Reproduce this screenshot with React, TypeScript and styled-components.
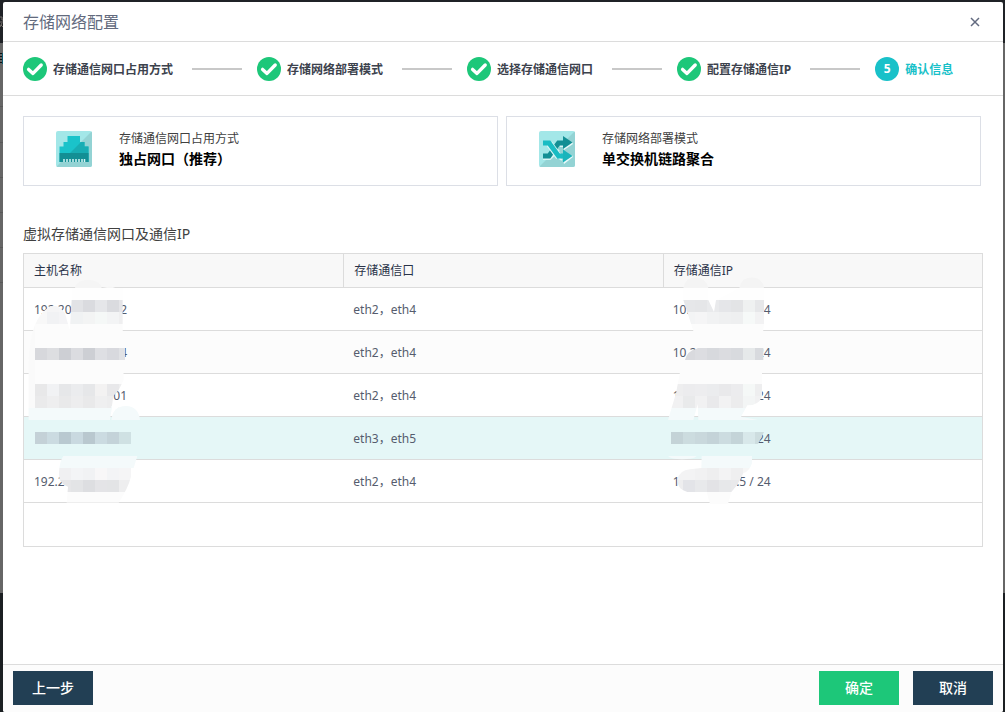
import React from "react";
import styled, { createGlobalStyle, css } from "styled-components";

const GlobalStyle = createGlobalStyle`
  *, *::before, *::after { box-sizing: border-box; }
  body {
    margin: 0;
    font-family: "Noto Sans", "Noto Sans CJK SC", sans-serif;
    font-size: 12px;
    line-height: 20px;
    color: #555c6e;
  }
`;

const Backdrop = styled.div`
  position: relative;
  min-height: 100vh;
  display: flex;
  padding: 2px 2px 0 3px;
  background: linear-gradient(#1f2226 43px, #666666 43px, #666666 593px, #1b1f22 593px);
`;

const PageEdge = styled.svg`
  position: absolute;
  top: 0;
  left: 0;
`;

const Dialog = styled.section`
  flex: 1;
  min-width: 0;
  display: flex;
  flex-direction: column;
  background: #ffffff;
  border-radius: 2px;
  overflow: hidden;
`;

const DialogHeader = styled.header`
  display: flex;
  align-items: center;
  justify-content: space-between;
  height: 40px;
  padding: 0 20px;
  border-bottom: 1px solid #dcdcdc;
`;

const DialogTitle = styled.h1`
  margin: 0;
  font-size: 16px;
  font-weight: 400;
  line-height: 24px;
  color: #626a7d;
`;

const CloseButton = styled.button`
  display: flex;
  align-items: center;
  justify-content: center;
  width: 16px;
  height: 16px;
  padding: 0;
  border: 0;
  background: none;
  color: #636b80;
  cursor: pointer;
`;

const Steps = styled.ol`
  display: flex;
  align-items: center;
  height: 54px;
  margin: 0;
  padding: 0 20px;
  list-style: none;
  border-bottom: 1px solid #dcdcdc;
`;

const Step = styled.li<{ $current?: boolean }>`
  display: flex;
  align-items: center;
  gap: 6px;
  flex: none;
  font-weight: 700;
  color: ${(p) => (p.$current ? "#19c1c9" : "#3c424d")};

  &:not(:last-child)::after {
    content: "";
    width: 50px;
    height: 2px;
    margin: 0 15px 0 13px;
    background: #c8c8c8;
  }
`;

const StepName = styled.span`
  padding-top: 2px;
`;

const StepNumber = styled.span`
  display: flex;
  align-items: center;
  justify-content: center;
  width: 24px;
  height: 24px;
  border-radius: 50%;
  background: #19c1c9;
  color: #ffffff;
`;

const Body = styled.main`
  flex: 1;
  padding: 20px;
`;

const Cards = styled.div`
  display: grid;
  grid-template-columns: 1fr 1fr;
  gap: 8px;
  padding-right: 2px;
`;

const Card = styled.div`
  display: flex;
  align-items: center;
  gap: 27px;
  height: 70px;
  padding: 0 32px 4px;
  border: 1px solid #dcdfe6;
`;

const CardLabel = styled.div`
  color: #404040;
`;

const CardValue = styled.div`
  font-size: 14px;
  font-weight: 700;
  color: #000000;
`;

const SectionTitle = styled.h2`
  margin: 38px 0 9px;
  font-size: 14px;
  font-weight: 400;
  color: #404040;
`;

const TableBox = styled.div`
  padding-bottom: 43px;
  border: 1px solid #dcdcdc;
`;

const Table = styled.table`
  width: 100%;
  table-layout: fixed;
  border-collapse: separate;
  border-spacing: 0;
`;

const HeadCell = styled.th`
  position: relative;
  height: 34px;
  padding: 0 10px;
  border-bottom: 1px solid #dcdcdc;
  background: #f8f8f8;
  font-weight: 400;
  text-align: left;
  color: #2a3348;

  & + & {
    border-left: 1px solid #dcdcdc;
  }
`;

const Row = styled.tr<{ $active?: boolean }>`
  &:nth-child(even) {
    background: #fcfcfc;
  }
  ${(p) =>
    p.$active &&
    css`
      &&& {
        background: #e5f7f7;
      }
    `}
`;

const Cell = styled.td`
  height: 43px;
  padding: 2px 10px 0;
  border-bottom: 1px solid #dcdcdc;
`;

const Masked = styled.span<{ $width: number }>`
  display: flex;
  justify-content: space-between;
  width: ${(p) => p.$width}px;
  white-space: pre;
`;

const MosaicSvg = styled.svg`
  position: absolute;
  z-index: 1;
  top: 0;
  left: 0;
  pointer-events: none;
`;

const DialogFooter = styled.footer`
  display: flex;
  gap: 14px;
  padding: 6px 10px 7px;
  border-top: 1px solid #dcdcdc;
  background: #fcfcfc;
`;

const Button = styled.button<{ $primary?: boolean }>`
  width: 80px;
  height: 34px;
  padding: 0;
  border: 0;
  background: ${(p) => (p.$primary ? "#1dc779" : "#223f54")};
  color: #ffffff;
  font: inherit;
  font-size: 14px;
  font-weight: 500;
  cursor: pointer;

  &:first-child {
    margin-right: auto;
  }
`;

const CheckIcon = () => (
  <svg width="24" height="24" viewBox="0 0 24 24" aria-hidden="true">
    <circle cx="12" cy="12" r="12" fill="#1dc779" />
    <path d="M5.6 12.4 L10 16.4 L18.2 8" fill="none" stroke="#fff" strokeWidth="3.4" strokeLinecap="round" strokeLinejoin="round" />
  </svg>
);

const PortIcon = () => (
  <svg width="36" height="36" viewBox="0 0 36 36" aria-hidden="true">
    <clipPath id="port-tile"><rect width="36" height="36" rx="2" /></clipPath>
    <clipPath id="port-body"><path d="M11.500 5H24v6h4.500v4.500h4V31h-29V15.500h4V11h4z" /></clipPath>
    <g clipPath="url(#port-tile)">
      <path d="M0 0h36v36H0z" fill="#a3e7e8" />
      <path d="M36 0v36H0z" fill="#93d3d4" />
    </g>
    <g clipPath="url(#port-body)">
      <path d="M0 0h36v36H0z" fill="#1ac3ca" />
      <path d="M36 0v36H0z" fill="#18adb3" />
      <path d="M0 22h36v14H0z" fill="#138f94" />
    </g>
    <path d="M8 28v3M11 28v3M14 28v3M17 28v3M20 28v3M23 28v3M26 28v3M28.500 28v3" stroke="#d5f4f4" strokeWidth="1.500" />
  </svg>
);

const ShuffleIcon = () => (
  <svg width="36" height="36" viewBox="0 0 36 36" aria-hidden="true">
    <clipPath id="mix-tile"><rect width="36" height="36" rx="2" /></clipPath>
    <g clipPath="url(#mix-tile)">
      <path d="M0 0h36v36H0z" fill="#a3e7e8" />
      <path d="M36 0v36H0z" fill="#93d3d4" />
    </g>
    <path d="M4 28h7l9-9M20 27l3 2M21 15h3" fill="none" stroke="#d9f5f5" strokeWidth="2" />
    <path d="M25 19l9-6-1-2-9 6zM25 33l9-7-1-2-9 6z" fill="#e8f9f9" />
    <path d="M4 25h6L19.500 12H25" fill="none" stroke="#138f94" strokeWidth="5" />
    <path d="M24 5l9.500 6.500L24 18z" fill="#138f94" />
    <path d="M10.500 13L20 26" fill="none" stroke="#d9f5f5" strokeWidth="7" />
    <path d="M4 12h6l9.500 13H25" fill="none" stroke="#19bcc3" strokeWidth="5" />
    <path d="M24 18.500l9.500 6.500L24 31.500z" fill="#19b4bb" />
  </svg>
);

type Band = { y: number; x: number; h?: number; colors: string[] };

const CELL = 36;

const hostShape =
  "M225 24C228 -8 300 -8 305 24L318 22Q332 16 346 24L368 24V132L371 300L356 330L340 348L330 420H85V250Q90 150 118 110Q160 50 195 100L209 150L215 60V24Z" +
  "M335 420Q338 378 378 378Q416 380 420 420Z" +
  "M105 204H375V240H105ZM105 456H393V492H105Z" +
  "M190 528H412L393 590Q384 625 356 668H200L204 620Q176 612 177 580Q178 545 190 528Z";

const hostBands: Band[] = [
  { y: -12, x: 213, colors: Array(5).fill("#f5f5f5") },
  { y: 24, x: 213, colors: Array(5).fill("#fefefe") },
  { y: 60, x: 105, colors: ["#f8f8f8", "#f5f5f6", "#f6f6f7", "#e2e3e6", "#dadbdf", "#e5e6e9", "#dadbdf", "#e5e5e8"] },
  { y: 96, x: 69, colors: ["#fafafa", "#f8f8f8", "#f1f2f4", "#f4f4f6", "#f0f2f3", "#f3f4f4", "#f5f8f7", "#f3f4f5", "#efeff0"] },
  { y: 132, x: 69, h: 72, colors: ["#fafafa", ...Array(8).fill("#fcfcfc")] },
  { y: 204, x: 69, colors: ["#fafafa", "#d7d8dc", "#dddee1", "#cdcfd4", "#dbdce0", "#cdcfd4", "#dedfe3", "#d8d9de", "#e1e2e5"] },
  { y: 240, x: 69, h: 72, colors: ["#fafafa", ...Array(8).fill("#fcfcfc")] },
  { y: 312, x: 69, colors: ["#fafafa", "#e8e8e9", "#f1f2f4", "#e6e7e9", "#ebecee", "#e6e7e9", "#f3f2f2", "#e8e8ea", "#eeeeef"] },
  { y: 348, x: 69, colors: ["#fafafa", "#eaeaeb", "#eeeeef", "#e9e9ea", "#ededee", "#e9e9ea", "#efeff0", "#ededee"] },
  { y: 378, x: 333, h: 42, colors: Array(3).fill("#f4fafb") },
  { y: 384, x: 69, colors: Array(8).fill("#f4fafb") },
  { y: 456, x: 105, colors: ["#c4d1d7", "#cbdbe1", "#b9c9d0", "#c9d9e0", "#b9c8cf", "#cbdbe1", "#c4d3d9", "#cfe1e3"] },
  { y: 528, x: 177, colors: Array(7).fill("#f4fafb") },
  { y: 564, x: 177, colors: ["#f0f0f2", "#f3f4f6", "#f1f2f4", "#f8f7f8", "#f3f4f6", "#f5f5f6"] },
  { y: 600, x: 177, colors: ["#e6e6e8", "#e3e4e6", "#dddee1", "#e4e4e7", "#e3e4e6", "#eeeeef"] },
  { y: 636, x: 177, colors: Array(7).fill("#fcfcfc") },
];

const addressShape =
  "M160 114Q166 82 198 82Q228 84 235 114L235 150L252 186L258 150L328 114Q334 82 366 82Q398 84 402 114V222L398 258V294H400V330L396 366V440Q386 466 352 466L333 500L384 510H205L203 462L190 510H114L138 430L150 366L165 330Q172 302 200 296L204 294L195 258L160 150Z" +
  "M123 546H402L384 582H123Z" +
  "M114 618H200Q190 628 156 628Q124 628 114 618Z" +
  "M215 618H366V640Q358 664 340 670L322 704L304 726L294 762H240L230 726H172Q142 718 142 690Q148 660 180 658L214 654Z";

const addressBands: Band[] = [
  { y: 78, x: 159, colors: Array(7).fill("#f4f4f4") },
  { y: 114, x: 159, colors: Array(7).fill("#fefefe") },
  { y: 150, x: 159, colors: ["#e6e7e9", "#e5e6e8", "#e9eaec", "#e5e6e9", "#e3e4e6", "#eff1f1", "#e6e7e9"] },
  { y: 186, x: 159, colors: ["#f3f4f5", "#f5f5f6", "#f1f2f3", "#eff0f1", "#eeeff0", "#f6f9f8", "#f2f2f3"] },
  { y: 222, x: 159, h: 72, colors: Array(7).fill("#fcfcfc") },
  { y: 294, x: 159, colors: ["#d9dade", "#dcdde1", "#d7d9dd", "#dbdce0", "#d8dade", "#e6e9ea", "#d8dade"] },
  { y: 330, x: 123, h: 72, colors: Array(8).fill("#fcfcfc") },
  { y: 402, x: 123, colors: ["#eeeeef", "#ececee", "#ededef", "#ebecee", "#e9e9eb", "#ececee", "#f5f8f7", "#eeeeef"] },
  { y: 438, x: 123, colors: ["#f1f1f2", "#e9eaeb", "#f1f1f2", "#e9e9eb", "#f2f2f3", "#ececed", "#f3f5f5", "#f1f1f2"] },
  { y: 474, x: 87, colors: Array(9).fill("#f4fafb") },
  { y: 546, x: 123, colors: ["#c4d3d7", "#ccdcdf", "#c9d8dc", "#c4d3d8", "#ccdce0", "#c4d4d8", "#d8e8ea", "#cddddf"] },
  { y: 618, x: 87, colors: Array(9).fill("#f4fafb") },
  { y: 654, x: 123, colors: ["#f3f3f4", "#f3f3f4", "#f1f1f2", "#eeeeef", "#f3f3f4", "#efeff0", "#f6f6f6"] },
  { y: 690, x: 123, colors: ["#eeeeef", "#e3e4e8", "#e8e9eb", "#e3e3e6", "#e7e8ea", "#e9e9eb", "#f1f1f2"] },
  { y: 726, x: 195, colors: Array(4).fill("#fcfcfc") },
];

const Mosaic = ({ id, viewBox, shape, bands }: { id: string; viewBox: string; shape: string; bands: Band[] }) => (
  <MosaicSvg width="200" height="260" viewBox={viewBox} aria-hidden="true">
    <clipPath id={id}><path d={shape} /></clipPath>
    <g clipPath={`url(#${id})`} shapeRendering="crispEdges">
      {bands.map((band) =>
        band.colors.map((fill, i) => (
          <rect key={`${band.y}-${i}`} x={band.x + i * CELL} y={band.y} width={CELL} height={band.h ?? CELL} fill={fill} />
        )),
      )}
    </g>
  </MosaicSvg>
);

const finishedSteps = ["存储通信网口占用方式", "存储网络部署模式", "选择存储通信网口", "配置存储通信IP"];

const rows = [
  { host: ["192.20", "2"], ports: "eth2，eth4", ip: ["10.", "/ 24"] },
  { host: ["", "4"], ports: "eth2，eth4", ip: ["10.2", "/ 24"] },
  { host: ["", "01"], ports: "eth2，eth4", ip: ["1", "/ 24"] },
  { host: ["", ""], ports: "eth3，eth5", ip: ["", "/ 24"], active: true },
  { host: ["192.2", ""], ports: "eth2，eth4", ip: ["1", ".5 / 24"] },
];

export default function App() {
  return (
    <>
      <GlobalStyle />
      <Backdrop>
        {/* Sliver of the dimmed page that shows beside the dialog */}
        <PageEdge width="3" height="300" viewBox="0 0 3 300" aria-hidden="true">
          <path d="M0 17h2v3h1M0 22h3M2 23l-2 4M1 25l2 2" fill="none" stroke="#77716c" />
          <path d="M0 53.500h2M0 56.500h2M0 59.500h2M0 62.500h2" stroke="#111111" />
          <path d="M2.500 53v11" stroke="#0d5a70" />
          <path d="M0 106.500h3M0 142.500h3M0 177.500h3M0 212.500h3M0 247.500h3M0 282.500h3" stroke="#585858" />
        </PageEdge>
        <Dialog role="dialog" aria-labelledby="dialog-title">
          <DialogHeader>
            <DialogTitle id="dialog-title">存储网络配置</DialogTitle>
            <CloseButton type="button" aria-label="关闭">
              <svg width="10" height="10" viewBox="0 0 10 10" aria-hidden="true">
                <path d="M1 1l8 8M9 1l-8 8" stroke="currentColor" strokeWidth="1.500" />
              </svg>
            </CloseButton>
          </DialogHeader>
          <Steps>
            {finishedSteps.map((name) => (
              <Step key={name}>
                <CheckIcon />
                <StepName>{name}</StepName>
              </Step>
            ))}
            <Step $current aria-current="step">
              <StepNumber>5</StepNumber>
              <StepName>确认信息</StepName>
            </Step>
          </Steps>
          <Body>
            <Cards>
              <Card>
                <PortIcon />
                <div>
                  <CardLabel>存储通信网口占用方式</CardLabel>
                  <CardValue>独占网口（推荐）</CardValue>
                </div>
              </Card>
              <Card>
                <ShuffleIcon />
                <div>
                  <CardLabel>存储网络部署模式</CardLabel>
                  <CardValue>单交换机链路聚合</CardValue>
                </div>
              </Card>
            </Cards>
            <SectionTitle id="table-title">虚拟存储通信网口及通信IP</SectionTitle>
            <TableBox>
              <Table aria-labelledby="table-title">
                <thead>
                  <tr>
                    <HeadCell scope="col">
                      主机名称
                      <Mosaic id="host-mask" viewBox="72 -78 600 780" shape={hostShape} bands={hostBands} />
                    </HeadCell>
                    <HeadCell scope="col">存储通信口</HeadCell>
                    <HeadCell scope="col">
                      存储通信IP
                      <Mosaic id="address-mask" viewBox="102 12 600 780" shape={addressShape} bands={addressBands} />
                    </HeadCell>
                  </tr>
                </thead>
                <tbody>
                  {rows.map((row, i) => (
                    <Row key={i} $active={row.active}>
                      <Cell>
                        <Masked $width={93}>
                          <span>{row.host[0]}</span>
                          <span>{row.host[1]}</span>
                        </Masked>
                      </Cell>
                      <Cell>{row.ports}</Cell>
                      <Cell>
                        <Masked $width={98}>
                          <span>{row.ip[0]}</span>
                          <span>{row.ip[1]}</span>
                        </Masked>
                      </Cell>
                    </Row>
                  ))}
                </tbody>
              </Table>
            </TableBox>
          </Body>
          <DialogFooter>
            <Button type="button">上一步</Button>
            <Button type="button" $primary>确定</Button>
            <Button type="button">取消</Button>
          </DialogFooter>
        </Dialog>
      </Backdrop>
    </>
  );
}
